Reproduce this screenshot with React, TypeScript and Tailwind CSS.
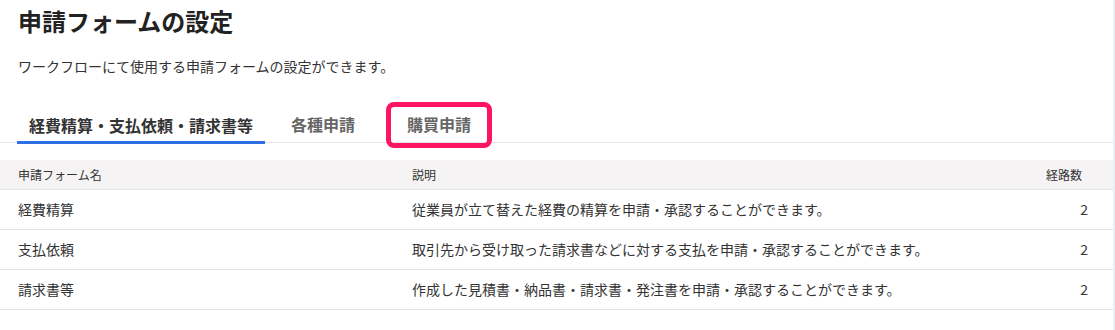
const font = { fontFamily: '"Noto Sans CJK JP", "Noto Sans", sans-serif' };

type Row = { name: string; desc: string; count: number };

const rows: Row[] = [
  { name: "経費精算", desc: "従業員が立て替えた経費の精算を申請・承認することができます。", count: 2 },
  { name: "支払依頼", desc: "取引先から受け取った請求書などに対する支払を申請・承認することができます。", count: 2 },
  { name: "請求書等", desc: "作成した見積書・納品書・請求書・発注書を申請・承認することができます。", count: 2 },
];

function Tabs() {
  return (
    <div className="flex h-[40px] items-end border-b border-[#e6e6e6] mt-[27px]">
      <div className="ml-[17px] px-[12px] pb-[4px] border-b-[3px] border-[#2f6fe4] -mb-[2px] text-[16px] font-bold text-[#333]">
        経費精算・支払依頼・請求書等
      </div>
      <div className="ml-[14px] px-[12px] pb-[6px] text-[16px] font-bold text-[#666]">各種申請</div>
      <div className="relative ml-[28px] px-[12px] pb-[6px] text-[16px] font-bold text-[#666]">
        購買申請
        <div className="absolute left-[-9px] right-[-9px] top-[-10px] bottom-[-6px] rounded-[8px] border-[5px] border-[#ff1463]" />
      </div>
    </div>
  );
}

export default function App() {
  return (
    <div className="flex w-[1115px] h-[330px] bg-white" style={font}>
      <main className="w-[1113px]">
        <h1 className="pl-[18px] pt-[4px] text-[24px] leading-[34px] font-bold text-[#222]">申請フォームの設定</h1>
        <p className="pl-[18px] mt-[18px] text-[14px] leading-[20px] text-[#333]">
          ワークフローにて使用する申請フォームの設定ができます。
        </p>
        <Tabs />
        <div className="mt-[17px]">
          <div className="flex h-[30px] items-center bg-[#f5f3f3] border-b border-[#e3e3e3] text-[12px] text-[#333]">
            <div className="w-[412px] pl-[18px]">申請フォーム名</div>
            <div className="flex-1">説明</div>
            <div className="w-[100px] pr-[31px] text-right">経路数</div>
          </div>
          {rows.map((r) => (
            <div key={r.name} className="flex h-[40px] items-center border-b border-[#e3e3e3] text-[14px] text-[#333]">
              <div className="w-[412px] pl-[18px]">{r.name}</div>
              <div className="flex-1">{r.desc}</div>
              <div className="w-[100px] pr-[25px] text-right">{r.count}</div>
            </div>
          ))}
        </div>
      </main>
      <div className="w-[2px] bg-[#eaf0f8]" />
    </div>
  );
}
